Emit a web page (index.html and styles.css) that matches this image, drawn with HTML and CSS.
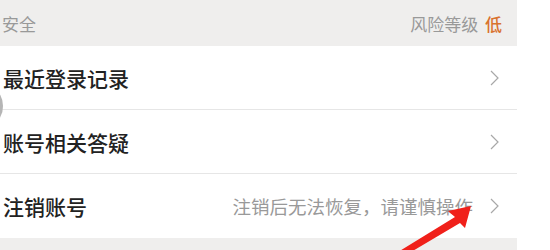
FILE: index.html
```html
<!DOCTYPE html>
<html lang="zh-CN">
<head>
  <meta charset="UTF-8" />
  <meta name="viewport" content="width=device-width, initial-scale=1.0" />
  <title>账号与安全</title>
  <link rel="stylesheet" href="styles.css">
</head>
<body>

<div class="pagina">
  <div class="cabecera-seccion">
    <span class="titulo-seccion">安全</span>
    <span class="riesgo">风险等级 <b>低</b></span>
  </div>

  <ul class="lista-opciones">
    <li class="opcion">
      <span class="opcion-nombre">最近登录记录</span>
      <svg class="flecha" width="9" height="16" viewBox="0 0 9 16"><polyline points="1,1 8,8 1,15" fill="none" stroke="#a8a8a8" stroke-width="1.2"/></svg>
    </li>
    <li class="opcion">
      <span class="opcion-nombre">账号相关答疑</span>
      <svg class="flecha" width="9" height="16" viewBox="0 0 9 16"><polyline points="1,1 8,8 1,15" fill="none" stroke="#a8a8a8" stroke-width="1.2"/></svg>
    </li>
    <li class="opcion">
      <span class="opcion-nombre">注销账号</span>
      <span class="opcion-nota">注销后无法恢复，请谨慎操作</span>
      <svg class="flecha" width="9" height="16" viewBox="0 0 9 16"><polyline points="1,1 8,8 1,15" fill="none" stroke="#a8a8a8" stroke-width="1.2"/></svg>
    </li>
  </ul>

  <div class="pie-gris"></div>
</div>

<div class="boton-flotante"></div>

<svg class="flecha-roja" width="550" height="250" viewBox="0 0 550 250">
  <polygon points="471,206 448,211 455,217 398,252 411,252 460,223 465,228" fill="#f0201a"/>
</svg>

</body>
</html>
```

FILE: styles.css
```css
body {
  margin: 0;
  font-family: "Noto Sans CJK SC", "Noto Sans", sans-serif;
  background-color: white;
  color: #222;
}

.pagina {
  width: 517px;
}

.cabecera-seccion {
  height: 46px;
  background-color: #efeeed;
  display: flex;
  justify-content: space-between;
  align-items: center;
  padding: 0 15px 0 2px;
  font-size: 17px;
  color: #999;
}

.riesgo b {
  font-weight: 500;
  color: #d9722f;
  margin-left: 3px;
}

.lista-opciones {
  list-style: none;
  margin: 0;
  padding: 0;
}

.opcion {
  height: 63px;
  display: flex;
  align-items: center;
  padding: 0 18px 0 3px;
  border-bottom: 1px solid #e6e6e6;
}

.opcion:last-child {
  height: 64px;
  border-bottom: none;
}

.opcion-nombre {
  flex: 1;
  font-size: 21px;
  font-weight: 500;
  color: #222;
}

.opcion-nota {
  font-size: 18.5px;
  color: #999;
  margin-right: 17px;
}

.pie-gris {
  height: 13px;
  background-color: #efeeed;
}

.boton-flotante {
  position: absolute;
  left: -14px;
  top: 91px;
  width: 17px;
  height: 30px;
  border-radius: 50%;
  background: #b5b5b5;
}

.flecha-roja {
  position: absolute;
  left: 0;
  top: 0;
  pointer-events: none;
}
```
